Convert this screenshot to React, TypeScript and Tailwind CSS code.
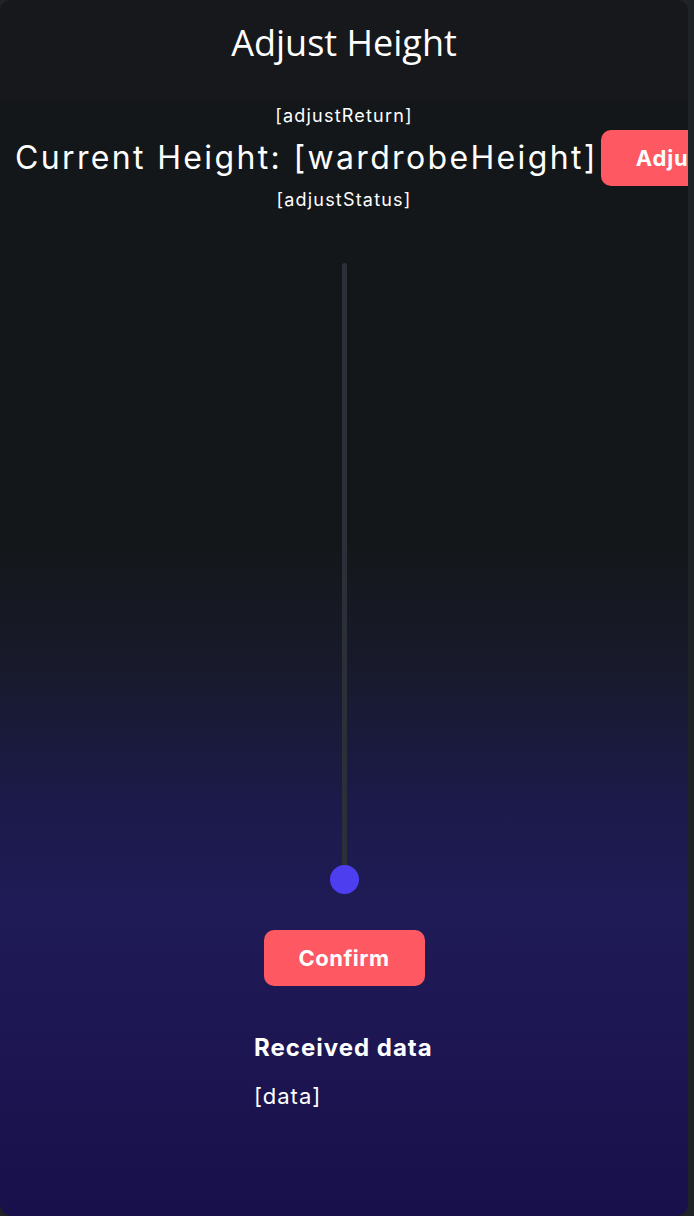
import React from "react";

export default function App() {
  return (
    <div className="w-[694px] h-[1216px] bg-[#1f2326] overflow-hidden">
      <div
        className="w-[688px] h-[1216px] rounded-[12px] overflow-hidden flex flex-col"
        style={{
          background:
            "linear-gradient(to bottom, #14171a 0%, #14171a 45%, #181a2c 55%, #1c1a4a 66%, #1f1b57 75%, #1c1551 88%, #18104a 100%)",
        }}
      >
        <div className="h-[101px] bg-[#16181b] flex items-start justify-center pt-[19px] shrink-0">
          <h1
            className="text-[36px] leading-[48px] text-white"
            style={{ fontFamily: '"Open Sans", sans-serif' }}
          >
            Adjust Height
          </h1>
        </div>
        <div
          className="flex flex-col items-center text-white"
          style={{ fontFamily: 'Inter, "Noto Sans", sans-serif' }}
        >
          <div className="text-[18px] leading-[26px] mt-[2px] tracking-[1.2px]">[adjustReturn]</div>
          <div className="flex items-center w-full pl-[15px] h-[58px]">
            <div className="text-[32px] leading-[40px] whitespace-nowrap tracking-[2.35px]">
              Current Height: [wardrobeHeight]
            </div>
            <button className="ml-[3px] h-[56px] pl-[35px] pr-[34px] rounded-[10px] bg-[#fe5862] text-white text-[22px] font-bold whitespace-nowrap shrink-0 text-left tracking-[0.8px]">
              Adjust
            </button>
          </div>
          <div className="text-[18px] leading-[26px] tracking-[1.2px]">[adjustStatus]</div>

          <div className="relative mt-[50px] w-[30px] h-[631px] flex justify-center">
            <div className="w-[5px] h-[608px] rounded-full bg-[#2b2f38]" />
            <div className="absolute left-[1px] bottom-0 w-[29px] h-[29px] rounded-full bg-[#4d3ff0]" />
          </div>

          <button className="mt-[36px] w-[161px] h-[56px] rounded-[10px] bg-[#fe5862] text-white text-[22px] font-bold tracking-[0.5px]">
            Confirm
          </button>

          <div className="mt-[46px] w-[180px] text-left">
            <div className="text-[24px] font-bold leading-[32px] tracking-[1px] whitespace-nowrap">Received data</div>
            <div className="text-[22px] leading-[30px] mt-[17px] tracking-[1px]">[data]</div>
          </div>
        </div>
      </div>
    </div>
  );
}
